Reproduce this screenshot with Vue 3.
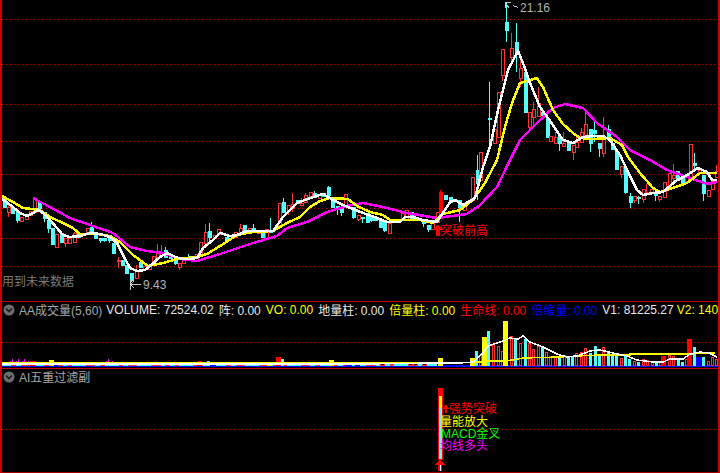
<script setup>
// y position of the dotted grid lines, page coordinates
const mainGrid = [19, 64, 104, 141, 174, 208, 238, 266]

// x, body top, body bottom, high, low, type (r hollow red, c cyan, f solid red)
const candles = [
  [3,197,207,197,208,'c'],[7,207,212,205,217,'r'],[11,207,213,207,213,'c'],[16,212,220,212,223,'c'],
  [20,217,221,217,221,'r'],[25,216,219,216,219,'r'],[29,211,215,211,215,'r'],[33,199,212,199,212,'r'],
  [38,202,208,202,208,'c'],[43,212,218,212,222,'c'],[47,220,228,218,233,'c'],[51,228,244,228,245,'c'],
  [55,234,247,234,247,'r'],[60,233,242,233,242,'c'],[64,238,243,238,247,'r'],[68,238,243,238,243,'r'],
  [73,233,242,232,243,'r'],[77,233,237,233,237,'c'],[86,228,233,228,233,'r'],[90,227,232,222,233,'c'],
  [94,235,238,235,238,'c'],[99,238,240,238,243,'c'],[103,238,240,238,242,'c'],[108,237,240,237,243,'c'],
  [112,243,253,243,253,'c'],[117,260,261,257,268,'r'],[121,260,265,260,265,'c'],[125,265,273,265,273,'c'],
  [130,273,280,273,282,'c'],[135,270,278,265,279,'r'],[139,262,267,262,267,'c'],[143,266,269,266,269,'r'],
  [148,265,269,265,269,'r'],[152,256,263,256,263,'r'],[156,252,257,244,258,'r'],[160,253,255,245,255,'r'],
  [164,250,257,247,258,'c'],[169,255,258,255,258,'c'],[174,260,263,260,265,'c'],[178,263,267,263,270,'r'],
  [182,259,263,259,263,'r'],[187,257,260,254,261,'c'],[195,254,258,254,258,'r'],[199,242,255,242,255,'r'],
  [204,232,243,224,244,'r'],[208,231,237,223,242,'c'],[213,235,238,235,238,'r'],[217,229,234,229,234,'r'],
  [225,237,240,237,240,'c'],[234,232,237,232,237,'r'],[239,228,232,224,233,'r'],[243,225,230,225,233,'c'],
  [248,228,232,228,232,'r'],[252,228,232,224,233,'c'],[257,230,233,230,233,'r'],[261,233,237,233,237,'c'],
  [265,229,238,229,238,'r'],[269,230,232,218,232,'c'],[278,203,225,203,225,'r'],[282,202,212,198,212,'c'],
  [287,205,211,205,215,'r'],[291,204,208,193,212,'r'],[296,200,203,200,203,'c'],[300,203,205,198,205,'r'],
  [304,195,202,193,203,'r'],[309,192,196,192,196,'r'],[313,193,197,191,197,'c'],[318,195,198,195,198,'r'],
  [322,193,196,193,196,'c'],[327,187,195,186,195,'c'],[331,198,207,198,207,'c'],[336,206,209,206,215,'c'],
  [340,208,212,208,216,'c'],[344,194,205,194,205,'r'],[352,207,217,207,219,'c'],[357,215,219,215,221,'r'],
  [361,217,218,217,223,'c'],[366,213,222,213,222,'c'],[370,215,220,215,222,'c'],[374,217,220,217,220,'c'],
  [379,220,227,220,228,'c'],[383,222,230,222,232,'c'],[388,223,233,223,233,'r'],[401,213,220,213,220,'r'],
  [405,210,220,210,220,'r'],[410,212,218,212,218,'c'],[422,220,223,220,227,'c'],[427,225,229,225,232,'c'],
  [431,223,229,223,229,'r'],[436,212,222,212,222,'r'],[439,192,212,190,213,'f'],[444,195,199,195,199,'c'],
  [449,197,202,197,202,'c'],[458,200,207,200,222,'c'],[463,204,210,204,210,'r'],[471,177,200,177,200,'r'],
  [476,170,183,155,200,'c'],[479,152,180,152,180,'r'],[488,118,119,82,143,'c'],[493,129,143,129,143,'r'],
  [497,92,137,92,137,'r'],[501,49,75,49,81,'r'],[505,22,30,2,42,'c'],[510,48,57,33,65,'r'],
  [515,42,53,23,72,'c'],[519,68,78,57,87,'r'],[524,72,112,72,112,'c'],[528,112,127,112,132,'r'],
  [532,109,117,102,127,'r'],[537,103,116,87,116,'r'],[541,112,115,112,115,'c'],[546,118,137,118,137,'c'],
  [549,136,141,136,141,'r'],[554,137,143,132,143,'r'],[558,136,143,136,151,'c'],[562,143,146,132,146,'r'],
  [567,143,150,143,150,'c'],[572,145,152,145,160,'r'],[575,142,147,137,147,'r'],[580,132,142,128,142,'r'],
  [584,124,135,113,139,'r'],[589,129,143,129,152,'c'],[593,130,133,122,142,'c'],[598,143,148,143,157,'c'],
  [602,137,153,117,157,'r'],[607,129,138,125,138,'c'],[611,143,149,143,149,'c'],[615,151,169,151,169,'c'],
  [620,166,174,166,178,'r'],[624,168,192,168,194,'c'],[629,196,202,193,208,'c'],[633,196,200,196,203,'r'],
  [637,197,198,196,204,'c'],[642,189,199,189,203,'r'],[645,192,193,184,195,'r'],[650,189,193,189,193,'r'],
  [654,193,195,193,201,'c'],[658,196,199,196,202,'r'],[663,182,197,182,197,'r'],[668,173,188,173,188,'r'],
  [672,175,178,164,182,'r'],[676,171,180,171,180,'c'],[681,177,183,177,183,'c'],[685,177,181,177,181,'r'],
  [689,144,178,144,178,'r'],[693,163,165,153,171,'c'],[698,170,172,170,172,'r'],[702,175,193,175,201,'c'],
  [707,190,196,190,196,'r'],[711,181,189,181,189,'r'],[715,171,177,165,177,'r']
]

const ma5 = '2,199 13,207 20,213 27,216 33,213 38,210 43,213 50,220 57,228 63,235 70,237 80,236 90,233 100,234 110,237 117,243 123,255 130,268 137,271 145,270 150,266 160,257 167,253 173,256 182,259 190,259 197,258 203,248 213,240 220,233 230,236 237,235 247,231 263,231 273,231 283,217 297,203 310,198 323,194 333,200 343,205 353,209 363,213 377,218 387,222 400,222 405,217 413,217 423,220 437,222 443,213 450,202 455,200 463,205 475,198 483,167 490,147 498,110 508,70 518,51 523,63 530,83 540,107 553,125 563,140 573,143 583,137 593,136 603,136 610,140 620,155 627,170 637,190 643,195 653,193 663,192 677,180 687,175 698,168 707,172 712,180 717,180'
const ma10 = '2,196 13,202 23,208 40,210 50,217 63,223 73,228 80,234 97,234 110,236 120,242 133,255 148,266 163,263 177,259 197,257 207,254 220,246 237,235 253,232 273,231 287,223 300,217 310,207 320,201 330,198 348,199 357,206 370,212 383,215 390,220 400,220 420,220 433,223 443,214 460,210 473,200 485,183 497,160 505,127 512,103 520,83 537,78 543,87 553,110 563,124 573,133 580,138 593,139 610,138 622,145 628,157 640,173 653,188 660,192 673,188 687,183 700,173 717,173'
const ma30 = '33,198 50,207 70,218 90,225 113,233 130,247 147,251 163,253 180,259 197,261 220,254 253,243 277,236 287,228 307,222 327,212 347,206 363,203 383,207 407,213 437,218 467,214 480,205 497,187 510,160 520,140 537,123 553,108 565,104 583,108 597,123 617,137 630,150 650,160 667,170 690,178 707,184 717,182'

const headerItems = [
  { text: 'AA成交量(5,60)', cls: 'gray title' },
  { text: 'VOLUME: 72524.02', cls: 'white' },
  { text: '阵: 0.00', cls: 'white' },
  { text: 'VO: 0.00', cls: 'yellow' },
  { text: '地量柱: 0.00', cls: 'white' },
  { text: '倍量柱: 0.00', cls: 'yellow' },
  { text: '生命线: 0.00', cls: 'red' },
  { text: '倍缩量: 0.00', cls: 'blue' },
  { text: 'V1: 81225.27', cls: 'white' },
  { text: 'V2: 140', cls: 'yellow last' }
]

const barColors = { r: '#ff3232', c: '#54fcfc', y: '#ffff00', f: '#ff0000', b: '#0000ff' }

// low volume bars on the left part of the panel
const lowPattern = 'ccrcrrcccrrcrcrcccrrcrc'
const lowBars = Array.from({ length: 93 }, (_, i) => {
  const x = Math.round(2 + i * 4.67)
  return [x, 363 + ((i * 7) % 3), lowPattern[i % lowPattern.length], 5]
})

// x, top, colour, outer width
const volBars = [
  ...lowBars,
  [30,362,'f',6],[49,361,'y',5],[54,365,'b',4],[197,362,'f',5],[207,362,'c',3],[210,365,'b',6],
  [267,363,'y',5],[276,358,'f',5],[281,360,'c',3],[329,361,'y',5],[345,365,'b',7],[355,365,'b',5],
  [438,359,'y',5],[470,359,'y',5],[475,352,'c',3],[479,356,'r',3],[482,338,'y',5],[487,332,'c',3],
  [492,345,'r',3],[497,347,'r',3],[501,352,'r',3],[503,322,'y',5],[510,337,'r',3],[514,339,'c',3],
  [519,344,'r',3],[524,340,'c',3],[528,344,'r',3],[532,350,'r',3],[537,347,'r',3],[541,348,'c',3],
  [545,353,'r',3],[549,357,'r',3],[554,357,'r',3],[558,357,'c',3],[563,356,'r',3],[567,358,'c',3],
  [571,357,'c',3],[575,354,'r',3],[580,353,'r',3],[584,349,'r',3],[589,354,'c',3],[594,347,'c',3],
  [598,355,'c',3],[602,348,'r',3],[607,352,'c',3],[611,357,'c',3],[615,357,'c',3],[620,359,'r',3],
  [624,357,'c',3],[628,360,'c',3],[633,362,'r',3],[637,363,'c',3],[642,360,'r',3],[646,361,'r',3],
  [651,362,'r',3],[655,363,'c',3],[659,363,'r',3],[661,357,'f',5],[668,356,'r',3],[672,357,'r',3],
  [677,361,'c',3],[681,363,'c',3],[685,360,'r',3],[687,340,'f',5],[693,348,'c',3],[696,358,'b',5],
  [702,358,'c',3],[707,362,'r',3],[711,358,'r',3],[715,360,'r',3]
]

const spikes = [8,10,12,14,16,18,20,22,24,26,28,104,106,108,110,112]

const v1Line = '2,365 130,365 200,365 360,365 436,364 460,364 473,363 482,355 488,347 503,342 510,339 518,340 523,337 530,343 543,348 557,355 567,358 577,357 590,352 600,351 613,354 627,357 637,361 653,363 663,363 670,360 683,360 690,355 700,353 709,354 717,358'
const v2Line = '2,364 440,364 487,363 488,362 503,362 513,361 523,359 560,358 577,357 600,356 630,356 630,355 687,355 715,354'
</script>

<template>
  <div class="screen">
    <div class="panel main">
      <svg class="chart" width="716" height="301" viewBox="2 0 716 301">
        <line v-for="y in mainGrid" :key="y" class="grid" x1="2" x2="718" :y1="y + 0.5" :y2="y + 0.5" />
        <g v-for="c in candles" :key="c[0]" shape-rendering="crispEdges">
          <line :x1="c[0] + 1.5" :x2="c[0] + 1.5" :y1="c[3]" :y2="c[4]" :stroke="barColors[c[5]]" />
          <rect
            :x="c[0] + 0.5"
            :y="c[1] + 0.5"
            width="3"
            :height="Math.max(c[2] - c[1], 1)"
            :fill="c[5] === 'r' ? '#000' : barColors[c[5]]"
            :stroke="barColors[c[5]]"
          />
        </g>
        <polyline class="ma" stroke="#ff00ff" :points="ma30" />
        <polyline class="ma" stroke="#ffff00" :points="ma10" />
        <polyline class="ma" stroke="#ffffff" :points="ma5" />

        <path class="mark" d="M505 2.5H511M505.5 2V8M507 5.5L509 7.5M513 5.5L518 7.5" />
        <text class="label soft" x="520" y="12">21.16</text>
        <path class="mark" d="M130.5 280V290M130 284.5H141M130 284.5L134 281.5M130 284.5L134 287.5" />
        <text class="label soft" x="143" y="289">9.43</text>
        <text class="label dim" x="2" y="286">用到未来数据</text>
        <path class="arrow" d="M438 224L443 230H440V236H436V230H433Z" />
        <text class="label red-text" x="440" y="235">突破前高</text>
      </svg>
    </div>

    <div class="panel volume">
      <div class="panel-head">
        <svg class="toggle" width="12" height="12" viewBox="0 0 12 12">
          <circle cx="6" cy="6" r="5.5" fill="#6e6e6e" />
          <path d="M3 4.5L6 7.5L9 4.5" fill="none" stroke="#1c1c1c" stroke-width="1.6" />
        </svg>
        <span v-for="item in headerItems" :key="item.text" :class="['head-item', item.cls]">{{ item.text }}</span>
      </div>
      <svg class="chart" width="716" height="50" viewBox="2 318 716 50">
        <line class="grid" x1="2" x2="718" y1="343.5" y2="343.5" />
        <rect x="2" y="366" width="716" height="2" fill="#0000ff" />
        <g shape-rendering="crispEdges">
          <rect
            v-for="(b, i) in volBars"
            :key="i"
            :x="b[0] + 0.5"
            :y="b[1] + 0.5"
            :width="b[3] - 1"
            :height="367 - b[1] - 1"
            :fill="b[2] === 'r' ? '#000' : barColors[b[2]]"
            :stroke="barColors[b[2]]"
          />
          <line v-for="x in spikes" :key="x" :x1="x + 0.5" :x2="x + 0.5" :y1="360 + (x % 3) * 2" y2="365" stroke="#ff00ff" />
        </g>
        <rect x="646" y="354" width="18" height="2" fill="#ff0000" />
        <polyline class="thin" stroke="#ffff00" :points="v2Line" />
        <polyline class="thin" stroke="#ffffff" :points="v1Line" />
      </svg>
    </div>

    <div class="panel filter">
      <div class="panel-head">
        <svg class="toggle" width="12" height="12" viewBox="0 0 12 12">
          <circle cx="6" cy="6" r="5.5" fill="#6e6e6e" />
          <path d="M3 4.5L6 7.5L9 4.5" fill="none" stroke="#1c1c1c" stroke-width="1.6" />
        </svg>
        <span class="head-item gray">AI五重过滤副</span>
      </div>
      <svg class="chart" width="716" height="89" viewBox="2 384 716 89">
        <line class="grid" x1="2" x2="718" y1="429.5" y2="429.5" />
        <rect x="438" y="388" width="5" height="72" fill="#ff0000" />
        <rect x="439" y="396" width="3" height="12" fill="#ffff00" />
        <rect x="439" y="408" width="3" height="51" fill="#54fcfc" />
        <path class="arrow" d="M440 459L445 465H442V471H438V465H435Z" />
        <rect x="440" y="465" width="1" height="6" fill="#fff" />
        <path class="arrow" d="M446 404L449 409H447V413H445V409H443Z" />
        <text class="label red-text" x="449" y="413">强势突破</text>
        <text class="label yellow-text" x="440" y="426">量能放大</text>
        <text class="label green-text" x="441" y="438">MACD金叉</text>
        <text class="label pink-text" x="440" y="450">均线多头</text>
        <line x1="2" x2="718" y1="472.5" y2="472.5" stroke="#a00000" />
      </svg>
    </div>
  </div>
</template>

<style scoped>
.screen {
  width: 720px;
  height: 473px;
  box-sizing: border-box;
  background: #000;
  border-left: 2px solid #d00000;
  border-right: 2px solid #d00000;
  display: flex;
  flex-direction: column;
  overflow: hidden;
  font-family: "Liberation Sans", "Noto Sans CJK SC", sans-serif;
  font-size: 12px;
}

.panel {
  display: flex;
  flex-direction: column;
  overflow: hidden;
}

.main {
  height: 301px;
  flex: none;
}

.volume {
  height: 67px;
  flex: none;
  border-top: 1px solid #d00000;
  box-sizing: border-box;
}

.filter {
  flex: 1;
  border-top: 1px solid #d00000;
}

.panel-head {
  height: 15px;
  flex: none;
  display: flex;
  align-items: center;
  gap: 5px;
  white-space: nowrap;
  padding-left: 1px;
}

.toggle {
  flex: none;
  margin-right: -1px;
}

.head-item {
  flex: none;
}

.title {
  margin-right: -1px;
}

.last {
  margin-left: -2px;
}

.chart {
  display: block;
  flex: none;
}

.grid {
  stroke: #c00000;
  stroke-dasharray: 1 3;
  shape-rendering: crispEdges;
}

.ma {
  fill: none;
  stroke-width: 2.5;
  shape-rendering: crispEdges;
}

.thin {
  fill: none;
  stroke-width: 1.5;
  shape-rendering: crispEdges;
}

.mark {
  fill: none;
  stroke: #c8c8c8;
  shape-rendering: crispEdges;
}

.arrow {
  fill: #ff0000;
  shape-rendering: crispEdges;
}

.label {
  font-family: "Liberation Sans", "Noto Sans CJK SC", sans-serif;
  font-size: 12px;
}

.soft { fill: #b4b4b4; }
.dim { fill: #7a7a7a; }
.red-text { fill: #ff0000; }
.yellow-text { fill: #ffff00; }
.green-text { fill: #00ff00; }
.pink-text { fill: #ff00ff; }

.gray { color: #a8a8a8; }
.white { color: #e8e8e8; }
.yellow { color: #ffff00; }
.red { color: #ff0000; }
.blue { color: #0000ff; }
</style>
